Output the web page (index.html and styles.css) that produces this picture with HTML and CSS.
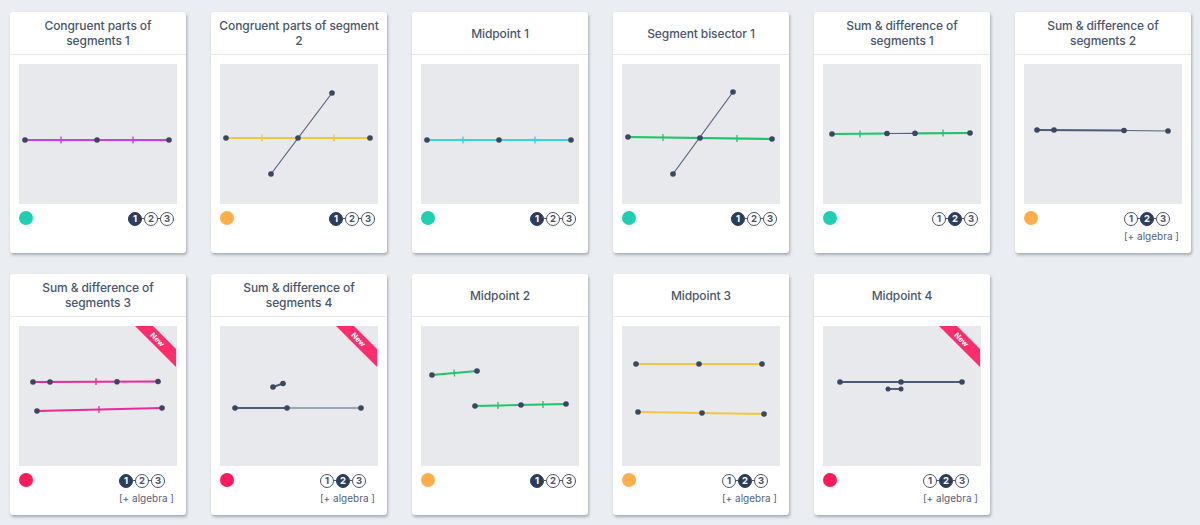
FILE: index.html
```html
<!DOCTYPE html>
<html lang="en">
<head>
  <meta charset="UTF-8">
  <title>Segments</title>
  <link rel="stylesheet" href="styles.css">
</head>
<body>
  <div class="grid">

    <div class="card">
      <div class="card-title">Congruent parts of segments 1</div>
      <div class="preview">
        <svg width="157" height="140" viewBox="0 0 157 140">
          <line class="seg magenta" x1="6" y1="76" x2="150" y2="76"/>
          <line class="tick magenta" x1="42" y1="72.5" x2="42" y2="79.5"/>
          <line class="tick magenta" x1="114" y1="72.5" x2="114" y2="79.5"/>
          <circle class="pt" cx="6" cy="76" r="2.8"/>
          <circle class="pt" cx="78" cy="76" r="2.8"/>
          <circle class="pt" cx="150" cy="76" r="2.8"/>
        </svg>
      </div>
      <div class="card-foot">
        <span class="dot teal"></span>
        <div class="levels">
          <div class="steps"><span class="step on">1</span><span class="step">2</span><span class="step">3</span></div>
        </div>
      </div>
    </div>

    <div class="card">
      <div class="card-title">Congruent parts of segment 2</div>
      <div class="preview">
        <svg width="157" height="140" viewBox="0 0 157 140">
          <line class="seg yellow" x1="6" y1="74" x2="150" y2="74"/>
          <line class="tick yellow" x1="42" y1="70.5" x2="42" y2="77.5"/>
          <line class="tick yellow" x1="114" y1="70.5" x2="114" y2="77.5"/>
          <line class="thin" x1="51" y1="110" x2="112" y2="29"/>
          <circle class="pt" cx="6" cy="74" r="2.8"/>
          <circle class="pt" cx="78" cy="74" r="2.8"/>
          <circle class="pt" cx="150" cy="74" r="2.8"/>
          <circle class="pt" cx="51" cy="110" r="2.8"/>
          <circle class="pt" cx="112" cy="29" r="2.8"/>
        </svg>
      </div>
      <div class="card-foot">
        <span class="dot orange"></span>
        <div class="levels">
          <div class="steps"><span class="step on">1</span><span class="step">2</span><span class="step">3</span></div>
        </div>
      </div>
    </div>

    <div class="card">
      <div class="card-title">Midpoint 1</div>
      <div class="preview">
        <svg width="157" height="140" viewBox="0 0 157 140">
          <line class="seg cyan" x1="6" y1="76" x2="150" y2="76"/>
          <line class="tick cyan" x1="42" y1="72.5" x2="42" y2="79.5"/>
          <line class="tick cyan" x1="114" y1="72.5" x2="114" y2="79.5"/>
          <circle class="pt" cx="6" cy="76" r="2.8"/>
          <circle class="pt" cx="78" cy="76" r="2.8"/>
          <circle class="pt" cx="150" cy="76" r="2.8"/>
        </svg>
      </div>
      <div class="card-foot">
        <span class="dot teal"></span>
        <div class="levels">
          <div class="steps"><span class="step on">1</span><span class="step">2</span><span class="step">3</span></div>
        </div>
      </div>
    </div>

    <div class="card">
      <div class="card-title">Segment bisector 1</div>
      <div class="preview">
        <svg width="157" height="140" viewBox="0 0 157 140">
          <line class="seg green" x1="6" y1="73" x2="150" y2="75"/>
          <line class="tick green" x1="41" y1="70" x2="41" y2="77"/>
          <line class="tick green" x1="115" y1="71" x2="115" y2="78"/>
          <line class="thin" x1="51" y1="110" x2="111" y2="28"/>
          <circle class="pt" cx="6" cy="73" r="2.8"/>
          <circle class="pt" cx="78" cy="74" r="2.8"/>
          <circle class="pt" cx="150" cy="75" r="2.8"/>
          <circle class="pt" cx="51" cy="110" r="2.8"/>
          <circle class="pt" cx="111" cy="28" r="2.8"/>
        </svg>
      </div>
      <div class="card-foot">
        <span class="dot teal"></span>
        <div class="levels">
          <div class="steps"><span class="step on">1</span><span class="step">2</span><span class="step">3</span></div>
        </div>
      </div>
    </div>

    <div class="card">
      <div class="card-title">Sum &amp; difference of segments 1</div>
      <div class="preview">
        <svg width="157" height="140" viewBox="0 0 157 140">
          <line class="seg green" x1="9" y1="70" x2="64" y2="69.5"/>
          <line class="thin" x1="64" y1="69.5" x2="92" y2="69.3"/>
          <line class="seg green" x1="92" y1="69.3" x2="147" y2="69"/>
          <line class="tick green" x1="37" y1="66.5" x2="37" y2="73.5"/>
          <line class="tick green" x1="120" y1="65.5" x2="120" y2="72.5"/>
          <circle class="pt" cx="9" cy="70" r="2.8"/>
          <circle class="pt" cx="64" cy="69.5" r="2.8"/>
          <circle class="pt" cx="92" cy="69.3" r="2.8"/>
          <circle class="pt" cx="147" cy="69" r="2.8"/>
        </svg>
      </div>
      <div class="card-foot">
        <span class="dot teal"></span>
        <div class="levels">
          <div class="steps"><span class="step">1</span><span class="step on">2</span><span class="step">3</span></div>
        </div>
      </div>
    </div>

    <div class="card">
      <div class="card-title">Sum &amp; difference of segments 2</div>
      <div class="preview">
        <svg width="157" height="140" viewBox="0 0 157 140">
          <line class="slate" x1="13" y1="66" x2="100" y2="66.5"/>
          <line class="thin" x1="100" y1="66.5" x2="144" y2="67"/>
          <circle class="pt" cx="13" cy="66" r="2.8"/>
          <circle class="pt" cx="30" cy="66" r="2.8"/>
          <circle class="pt" cx="100" cy="66.5" r="2.8"/>
          <circle class="pt" cx="144" cy="67" r="2.8"/>
        </svg>
      </div>
      <div class="card-foot">
        <span class="dot orange"></span>
        <div class="levels">
          <div class="steps"><span class="step">1</span><span class="step on">2</span><span class="step">3</span></div>
          <div class="algebra">[+ algebra ]</div>
        </div>
      </div>
    </div>

    <div class="card">
      <div class="card-title">Sum &amp; difference of segments 3</div>
      <div class="preview">
        <svg width="157" height="140" viewBox="0 0 157 140">
          <line class="seg pink" x1="14" y1="56" x2="139" y2="55.5"/>
          <line class="tick pink" x1="77" y1="52" x2="77" y2="59"/>
          <line class="seg pink" x1="18" y1="85" x2="143" y2="82"/>
          <line class="tick pink" x1="80" y1="80" x2="80" y2="87"/>
          <circle class="pt" cx="14" cy="56" r="2.8"/>
          <circle class="pt" cx="31" cy="56" r="2.8"/>
          <circle class="pt" cx="98" cy="55.7" r="2.8"/>
          <circle class="pt" cx="139" cy="55.5" r="2.8"/>
          <circle class="pt" cx="18" cy="85" r="2.8"/>
          <circle class="pt" cx="143" cy="82" r="2.8"/>
          <polygon class="ribbon" points="116,0 134,0 157,23 157,41"/>
          <text class="new" x="138" y="14" transform="rotate(45 138 14)">New</text>
        </svg>
      </div>
      <div class="card-foot">
        <span class="dot red"></span>
        <div class="levels">
          <div class="steps"><span class="step on">1</span><span class="step">2</span><span class="step">3</span></div>
          <div class="algebra">[+ algebra ]</div>
        </div>
      </div>
    </div>

    <div class="card">
      <div class="card-title">Sum &amp; difference of segments 4</div>
      <div class="preview">
        <svg width="157" height="140" viewBox="0 0 157 140">
          <line class="slate" x1="53" y1="61" x2="63" y2="57.5"/>
          <line class="slate" x1="15" y1="82" x2="67" y2="82"/>
          <line class="thin" x1="67" y1="82" x2="141" y2="82"/>
          <circle class="pt" cx="53" cy="61" r="2.8"/>
          <circle class="pt" cx="63" cy="57.5" r="2.8"/>
          <circle class="pt" cx="15" cy="82" r="2.8"/>
          <circle class="pt" cx="67" cy="82" r="2.8"/>
          <circle class="pt" cx="141" cy="82" r="2.8"/>
          <polygon class="ribbon" points="116,0 134,0 157,23 157,41"/>
          <text class="new" x="138" y="14" transform="rotate(45 138 14)">New</text>
        </svg>
      </div>
      <div class="card-foot">
        <span class="dot red"></span>
        <div class="levels">
          <div class="steps"><span class="step">1</span><span class="step on">2</span><span class="step">3</span></div>
          <div class="algebra">[+ algebra ]</div>
        </div>
      </div>
    </div>

    <div class="card">
      <div class="card-title">Midpoint 2</div>
      <div class="preview">
        <svg width="157" height="140" viewBox="0 0 157 140">
          <line class="seg green" x1="11" y1="49" x2="56" y2="45"/>
          <line class="tick green" x1="33" y1="43.5" x2="33.5" y2="50.5"/>
          <line class="seg green" x1="54" y1="80" x2="145" y2="78"/>
          <line class="tick green" x1="77" y1="76" x2="77" y2="83"/>
          <line class="tick green" x1="122" y1="75" x2="122" y2="82"/>
          <circle class="pt" cx="11" cy="49" r="2.8"/>
          <circle class="pt" cx="56" cy="45" r="2.8"/>
          <circle class="pt" cx="54" cy="80" r="2.8"/>
          <circle class="pt" cx="100" cy="79" r="2.8"/>
          <circle class="pt" cx="145" cy="78" r="2.8"/>
        </svg>
      </div>
      <div class="card-foot">
        <span class="dot orange"></span>
        <div class="levels">
          <div class="steps"><span class="step on">1</span><span class="step">2</span><span class="step">3</span></div>
        </div>
      </div>
    </div>

    <div class="card">
      <div class="card-title">Midpoint 3</div>
      <div class="preview">
        <svg width="157" height="140" viewBox="0 0 157 140">
          <line class="seg yellow" x1="14" y1="38" x2="140" y2="38"/>
          <line class="seg yellow" x1="16" y1="86" x2="142" y2="88"/>
          <circle class="pt" cx="14" cy="38" r="2.8"/>
          <circle class="pt" cx="77" cy="38" r="2.8"/>
          <circle class="pt" cx="140" cy="38" r="2.8"/>
          <circle class="pt" cx="16" cy="86" r="2.8"/>
          <circle class="pt" cx="80" cy="87" r="2.8"/>
          <circle class="pt" cx="142" cy="88" r="2.8"/>
        </svg>
      </div>
      <div class="card-foot">
        <span class="dot orange"></span>
        <div class="levels">
          <div class="steps"><span class="step">1</span><span class="step on">2</span><span class="step">3</span></div>
          <div class="algebra">[+ algebra ]</div>
        </div>
      </div>
    </div>

    <div class="card">
      <div class="card-title">Midpoint 4</div>
      <div class="preview">
        <svg width="157" height="140" viewBox="0 0 157 140">
          <line class="slate" x1="17" y1="56" x2="139" y2="56"/>
          <line class="slate" x1="65" y1="63" x2="78" y2="63"/>
          <circle class="pt" cx="17" cy="56" r="2.8"/>
          <circle class="pt" cx="78" cy="56" r="2.8"/>
          <circle class="pt" cx="139" cy="56" r="2.8"/>
          <circle class="pt" cx="65" cy="63" r="2.5"/>
          <circle class="pt" cx="78" cy="63" r="2.5"/>
          <polygon class="ribbon" points="116,0 134,0 157,23 157,41"/>
          <text class="new" x="138" y="14" transform="rotate(45 138 14)">New</text>
        </svg>
      </div>
      <div class="card-foot">
        <span class="dot red"></span>
        <div class="levels">
          <div class="steps"><span class="step">1</span><span class="step on">2</span><span class="step">3</span></div>
          <div class="algebra">[+ algebra ]</div>
        </div>
      </div>
    </div>

  </div>
</body>
</html>
```

FILE: styles.css
```css
* {
  box-sizing: border-box;
}
body {
  margin: 0;
  background-color: #eaedf1;
  font-family: Inter, "Noto Sans", sans-serif;
}
.grid {
  display: grid;
  grid-template-columns: repeat(6, 176px);
  column-gap: 25px;
  row-gap: 21px;
  padding: 12px 10px;
}
.card {
  background-color: #fff;
  border-radius: 3px;
  height: 241px;
  box-shadow: 1px 2px 3px rgba(40, 50, 70, 0.35);
}
.card-title {
  height: 43px;
  border-bottom: 1px solid #e6e9ed;
  display: flex;
  align-items: center;
  justify-content: center;
  text-align: center;
  padding: 0 8px;
  font-size: 12px;
  font-weight: 500;
  line-height: 15px;
  letter-spacing: -0.1px;
  color: #4a576b;
}
.preview {
  margin: 9px 9px 0;
  height: 140px;
  background-color: #e7e9ed;
}
.preview svg {
  display: block;
}
.seg {
  stroke-width: 2.2;
}
.tick {
  stroke-width: 1.3;
}
.thin {
  stroke: #56627c;
  stroke-width: 1.2;
}
.slate {
  stroke: #4f5b75;
  stroke-width: 1.9;
}
.magenta { stroke: #c83ee0; }
.yellow { stroke: #f3c540; }
.cyan { stroke: #34d5e6; }
.green { stroke: #1fc46b; }
.pink { stroke: #ea2a95; }
.pt {
  fill: #3b4660;
}
.ribbon {
  fill: #ff2d6c;
}
.new {
  fill: #fff;
  font-size: 7.5px;
  font-weight: 700;
  text-anchor: middle;
  dominant-baseline: middle;
}
.card-foot {
  display: flex;
  justify-content: space-between;
  align-items: flex-start;
  padding: 7px 9px 0 9px;
}
.dot {
  width: 14px;
  height: 14px;
  border-radius: 50%;
}
.teal { background-color: #1fcfb1; }
.orange { background-color: #ffae4b; }
.red { background-color: #ff1a5b; }
.levels {
  display: flex;
  flex-direction: column;
  align-items: flex-start;
  padding-right: 3px;
}
.steps {
  display: flex;
  gap: 2px;
  padding-top: 1px;
}
.step {
  position: relative;
  width: 14px;
  height: 14px;
  border: 1.3px solid #4b566a;
  border-radius: 50%;
  font-size: 9.5px;
  font-weight: 700;
  color: #4b566a;
  display: flex;
  align-items: center;
  justify-content: center;
  line-height: 1;
}
.step + .step::before {
  content: "";
  position: absolute;
  left: -4px;
  top: 5px;
  width: 3px;
  height: 1.2px;
  background-color: #4b566a;
}
.step.on {
  background-color: #2c3d5b;
  border-color: #2c3d5b;
  color: #fff;
}
.algebra {
  margin-top: 4px;
  font-size: 10px;
  color: #56627a;
  white-space: nowrap;
}
```
